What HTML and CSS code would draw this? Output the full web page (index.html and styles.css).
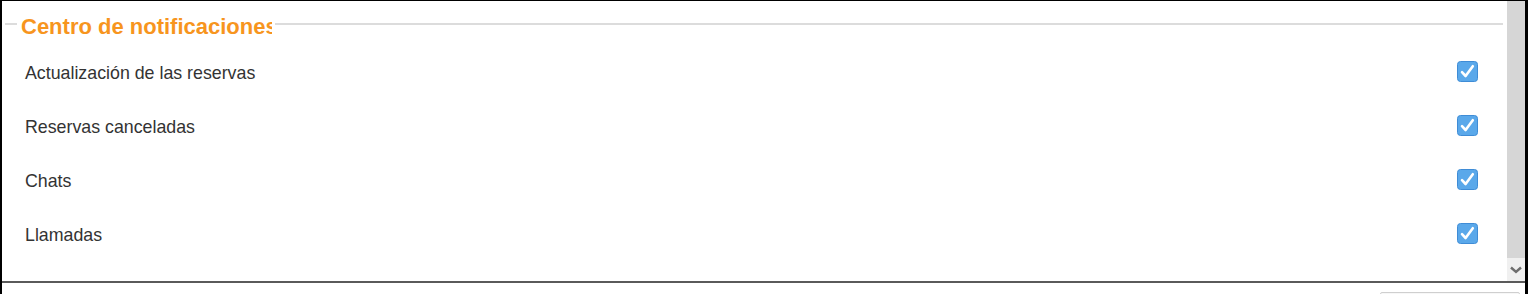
FILE: index.html
```html
<!DOCTYPE html>
<html lang="es">

<head>
    <meta charset="UTF-8">
    <meta name="viewport" content="width=device-width, initial-scale=1.0">
    <title>Centro de notificaciones</title>
    <link rel="stylesheet" href="styles.css">
</head>

<body>
    <div class="window">
        <div class="scroll-area">
            <div class="content">
                <div class="section-head">
                    <span class="rule rule-start"></span>
                    <h2 class="section-title">Centro de notificaciones</h2>
                    <span class="rule rule-end"></span>
                </div>
                <div class="options">
                    <div class="option">
                        <span class="option-label">Actualización de las reservas</span>
                        <span class="check">
                            <svg width="21" height="21" viewBox="0 0 21 21">
                                <rect x="0.5" y="0.5" width="20" height="20" rx="3" fill="#5aa8ea" stroke="#3f8cd6"/>
                                <path d="M5 11.2 L8.6 15 L15.8 5.2" fill="none" stroke="#fff" stroke-width="2.6" stroke-linecap="round" stroke-linejoin="round"/>
                            </svg>
                        </span>
                    </div>
                    <div class="option">
                        <span class="option-label">Reservas canceladas</span>
                        <span class="check">
                            <svg width="21" height="21" viewBox="0 0 21 21">
                                <rect x="0.5" y="0.5" width="20" height="20" rx="3" fill="#5aa8ea" stroke="#3f8cd6"/>
                                <path d="M5 11.2 L8.6 15 L15.8 5.2" fill="none" stroke="#fff" stroke-width="2.6" stroke-linecap="round" stroke-linejoin="round"/>
                            </svg>
                        </span>
                    </div>
                    <div class="option">
                        <span class="option-label">Chats</span>
                        <span class="check">
                            <svg width="21" height="21" viewBox="0 0 21 21">
                                <rect x="0.5" y="0.5" width="20" height="20" rx="3" fill="#5aa8ea" stroke="#3f8cd6"/>
                                <path d="M5 11.2 L8.6 15 L15.8 5.2" fill="none" stroke="#fff" stroke-width="2.6" stroke-linecap="round" stroke-linejoin="round"/>
                            </svg>
                        </span>
                    </div>
                    <div class="option">
                        <span class="option-label">Llamadas</span>
                        <span class="check">
                            <svg width="21" height="21" viewBox="0 0 21 21">
                                <rect x="0.5" y="0.5" width="20" height="20" rx="3" fill="#5aa8ea" stroke="#3f8cd6"/>
                                <path d="M5 11.2 L8.6 15 L15.8 5.2" fill="none" stroke="#fff" stroke-width="2.6" stroke-linecap="round" stroke-linejoin="round"/>
                            </svg>
                        </span>
                    </div>
                </div>
            </div>
            <div class="scrollbar">
                <div class="scroll-thumb"></div>
                <div class="scroll-down">
                    <svg width="14" height="10" viewBox="0 0 14 10">
                        <path d="M2 2.5 L7 7 L12 2.5" fill="none" stroke="#6e6e6e" stroke-width="2.4"/>
                    </svg>
                </div>
            </div>
        </div>
        <div class="footer">
            <button class="footer-btn"></button>
        </div>
    </div>
</body>

</html>
```

FILE: styles.css
```css
* {
    margin: 0px;
    padding: 0px;
    box-sizing: border-box;
}

body {
    font-family: "Liberation Sans", Arial, sans-serif;
    background: #fff;
    overflow: hidden;
}

.window {
    height: 294px;
    border-top: 1px solid #000;
    border-left: 2px solid #000;
    border-right: 3px solid #000;
    display: flex;
    flex-direction: column;
    overflow: hidden;
}

.scroll-area {
    height: 282px;
    flex-shrink: 0;
    display: flex;
    border-bottom: 2px solid #5a5a5a;
}

.content {
    flex: 1;
}

.section-head {
    display: flex;
    align-items: flex-start;
    padding: 13px 4px 0px 3px;
}

.rule {
    height: 2px;
    background: #dcdcdc;
    margin-top: 9px;
}

.rule-start {
    width: 12px;
    margin-right: 4px;
}

.rule-end {
    flex: 1;
    margin-left: 3px;
}

.section-title {
    width: 251px;
    overflow: hidden;
    white-space: nowrap;
    font-size: 22px;
    line-height: 25px;
    font-weight: bold;
    color: #f7951e;
}

.options {
    margin-top: 7px;
}

.option {
    height: 54px;
    display: flex;
    align-items: center;
    justify-content: space-between;
    padding: 0px 29px 0px 23px;
}

.option-label {
    font-size: 17.8px;
    color: #333;
}

.check {
    display: flex;
    margin-top: -3px;
}

.scrollbar {
    width: 18px;
    display: flex;
    flex-direction: column;
    background: #f0f0f0;
}

.scroll-thumb {
    height: 257px;
    background: #d6d6d6;
}

.scroll-down {
    flex: 1;
    display: flex;
    align-items: center;
    justify-content: center;
}

.footer {
    height: 11px;
    flex-shrink: 0;
    overflow: hidden;
    display: flex;
    justify-content: flex-end;
    padding-right: 5px;
}

.footer-btn {
    width: 140px;
    height: 30px;
    margin-top: 9px;
    border: 1px solid #cfcfcf;
    border-radius: 2px;
    background: #f7f7f7;
}
```
